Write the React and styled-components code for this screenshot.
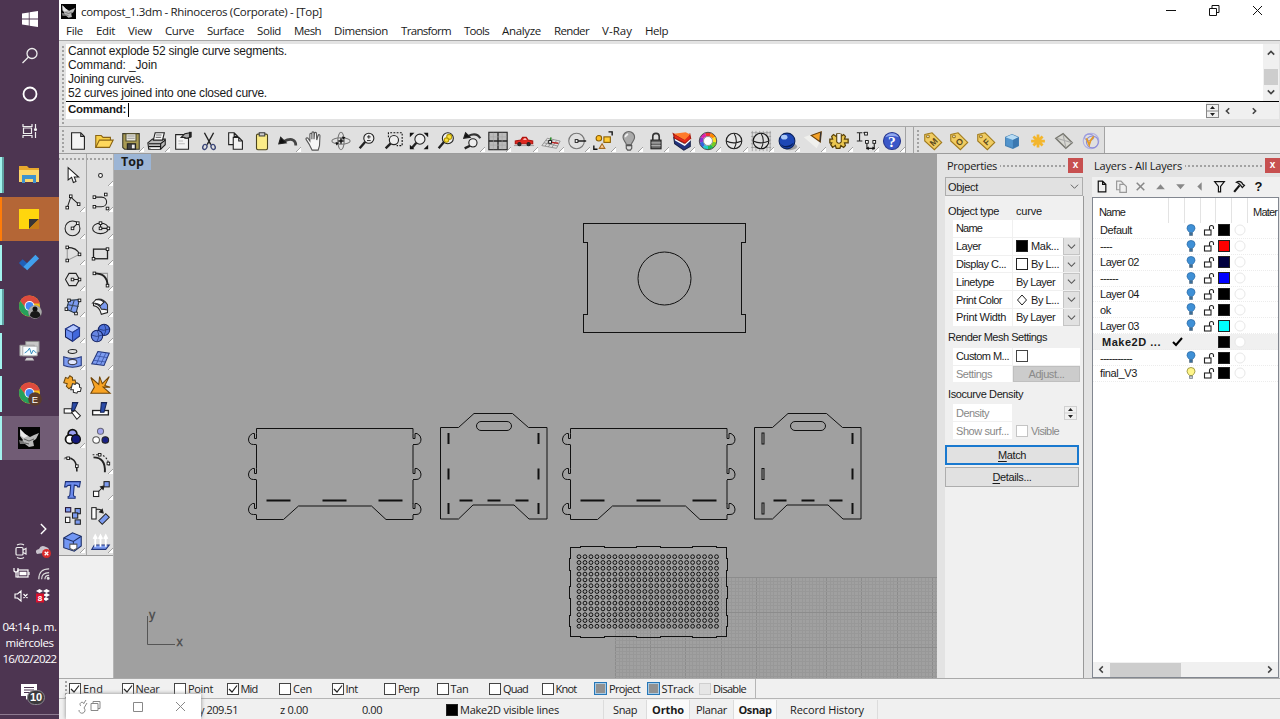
import React, { useLayoutEffect, useRef, useState } from 'react';
import styled, { createGlobalStyle, css } from 'styled-components';

const UI = '"Open Sans", "Noto Sans", sans-serif';
const SANS = '"Liberation Sans", Arial, sans-serif';

const Global = createGlobalStyle`
  * { box-sizing: border-box; }
  body { margin: 0; overflow: hidden; background: #f0f0f0; color: #1a1a1a; font: 12px ${SANS}; }
  svg { display: block; flex: none; overflow: visible; }
`;

/* ---------- text fitted to a fixed advance width ---------- */
const Span = styled.span`
  display: inline-block;
  flex: none;
  white-space: pre;
  font-family: ${p => (p.$ui ? UI : SANS)};
  font-size: ${p => p.$size || 12}px;
  font-weight: ${p => (p.$bold ? 700 : 400)};
  color: ${p => p.$color || 'inherit'};
`;
function Label({ w, ui, size, bold, color, children }) {
  const ref = useRef(null);
  const [gap, setGap] = useState(0);
  useLayoutEffect(() => {
    const natural = ref.current.getBoundingClientRect().width;
    setGap((w - natural) / Math.max(1, ref.current.textContent.length));
  }, [w]);
  return (
    <Span ref={ref} $ui={ui} $size={size} $bold={bold} $color={color} style={{ letterSpacing: `${gap}px` }}>
      {children}
    </Span>
  );
}

/* ---------- frame ---------- */
const Screen = styled.div`display: flex; width: 1280px; height: 719px; overflow: hidden;`;
const Main = styled.div`flex: 1; display: flex; flex-direction: column; min-width: 0; position: relative; background: #f0f0f0;`;
const Body = styled.div`display: flex; height: 524px; flex: none;`;

/* ---------- taskbar ---------- */
const Taskbar = styled.div`
  width: 59px; flex: none; height: 719px; background: #4d3551; color: #fff;
  display: flex; flex-direction: column;
`;
const StartItem = styled.div`height: 37.5px; flex: none; display: flex; align-items: center; justify-content: center;`;
const Apps = styled.div`margin-top: 3px; flex: none; display: flex; flex-direction: column;`;
const AppItem = styled.div`
  height: 43.9px; flex: none; display: flex; align-items: center; position: relative;
  padding-left: 18px;
  ${p => p.$bg && css`background: ${p.$bg};`}
`;
const AppBar = styled.div`
  width: 2px; height: ${p => (p.$full ? 44 : 36)}px; position: absolute; left: 0;
  background: ${p => p.$c};
  ${p => p.$double && css`width: 4px; background: linear-gradient(90deg, #a2f3ee 2px, #5fa3a3 2px);`}
`;
const Tray = styled.div`
  margin-top: 57px; flex: none; display: grid; grid-template-columns: 22px 22px; padding-left: 10px; row-gap: 0;
  grid-auto-rows: 22.6px; align-items: center; justify-items: center;
`;
const Clock = styled.div`margin-top: 11px; height: 48px; flex: none; display: flex; flex-direction: column; align-items: center; line-height: 16px;`;
const Notice = styled.div`position: relative; height: 28px; flex: none; margin-top: 13px; padding-left: 21px; padding-top: 4px;`;
const Count = styled.div`
  position: absolute; left: 27px; top: 10px; width: 18px; height: 15px; border-radius: 8px;
  background: #3a3a3d; border: 1px solid #8b8690; font: bold 11px/13px ${SANS}; text-align: center;
`;
const TaskLine = styled.div`height: 1px; flex: none; background: #8d7a90; margin-top: auto; margin-bottom: 4px;`;

/* ---------- title, menu, command ---------- */
const Title = styled.div`height: 22px; background: #fff; display: flex; align-items: center; padding-left: 2px; gap: 5px; flex: none;`;
const WinButtons = styled.div`margin-left: auto; display: flex; gap: 32px; padding-right: 17px; align-items: center; height: 20px; align-self: flex-start;`;
const Menu = styled.div`height: 18px; background: #fff; display: flex; padding: 0 0 0 7px; gap: 13px; align-items: center; flex: none; line-height: 16px;`;
const CommandArea = styled.div`
  height: 87px; border-top: 1px solid #a6a6a6; background: #e3e3e3; padding: 3px 1px 0 0; display: flex; flex: none;
  border-bottom: 1px solid #a9a9a9;
`;
const VGrip = styled.div`
  width: ${p => p.$w || 7}px; align-self: stretch; flex: none;
  background: radial-gradient(circle, #a2a2a2 0.9px, transparent 1.3px) 2px 1px / 4px 4px repeat-y;
`;
const CommandBox = styled.div`flex: 1; height: 75px; background: #fff; display: flex; flex-direction: column;`;
const History = styled.div`height: 58px; display: flex; border-bottom: 1px solid #000; line-height: 14px;`;
const Lines = styled.div`flex: 1; display: flex; flex-direction: column; padding: 0 0 0 2px; align-items: flex-start;`;
const VScroll = styled.div`width: 16px; background: #f0f0f0; display: flex; flex-direction: column; align-items: center; justify-content: space-between; padding: 5px 0;`;
const VThumb = styled.div`width: 14px; height: 16px; margin-top: 9px; background: #cdcdcd;`;
const Prompt = styled.div`height: 17px; display: flex; line-height: 15px; padding-left: 2px;`;
const Caret = styled.div`width: 1px; height: 14px; background: #000; margin: 1px 0 0 2px;`;
const PromptTools = styled.div`margin-left: auto; display: flex; align-items: center; width: 73px; background: #f0f0f0;`;
const PromptArrow = styled.div`width: ${p => p.$w}px; display: flex; justify-content: flex-end;`;

/* ---------- toolbars ---------- */
const Toolbars = styled.div`height: 27px; display: flex; border-bottom: 1px solid #9c9c9c; background: #f0f0f0; flex: none;`;
const Bar = styled.div`
  background: #e0e0e0; border-right: 1px solid #a3a3a3; display: flex; align-items: center; padding-top: 1px;
  width: ${p => p.$w}px; flex: none;
`;
const Tool = styled.div`width: ${p => p.$w || 26.26}px; height: 26.2px; flex: none; display: flex; align-items: center; justify-content: center; position: relative;`;
const Fly = styled.div`
  position: absolute; right: 0; bottom: 2px; width: 5px; height: 5px;
  background: linear-gradient(135deg, transparent 48%, #999 49%, #fff 60%);
`;
const Side = styled.div`width: 55px; flex: none; background: #f0f0f0; border-right: 1px solid #b5b5b5;`;
const SideTools = styled.div`display: grid; grid-template-columns: 28px 26px; width: 54px; height: 402px; background: #e0e0e0; border-bottom: 1px solid #9a9a9a;`;
const SideCol = styled.div`display: flex; flex-direction: column; ${p => p.$line && css`border-right: 1px solid #a8a8a8;`}`;
const HGrip = styled.div`
  height: ${p => p.$h || 8}px; flex: ${p => (p.$grow ? 1 : 'none')};
  background: radial-gradient(circle, #a2a2a2 0.9px, transparent 1.3px) 2px ${p => p.$y ?? 3}px / 4px 4px repeat-x;
`;

/* ---------- viewport ---------- */
const Viewport = styled.div`width: 823px; flex: none; background: #a0a0a0; position: relative;`;
const ViewTab = styled.div`position: absolute; left: 0; top: 0; width: 37px; height: 16px; background: #9cb5d5; padding-left: 7px; line-height: 15px;`;

/* ---------- right panels ---------- */
const Panels = styled.div`display: flex; flex: 1; background: #e3e3e3; min-width: 0;`;
const Panel = styled.div`width: ${p => p.$w}px; margin-left: ${p => p.$ml}px; display: flex; flex-direction: column; flex: none;`;
const PanelHead = styled.div`height: 23px; display: flex; align-items: center; gap: 3px; padding-left: 2px; flex: none;`;
const Close = styled.div`width: 15px; height: 15px; background: #c75050; color: #fff; font: bold 10px/13px ${SANS}; text-align: center;`;
const Select = styled.div`height: 19px; background: #e1e1e1; border: 1px solid #adadad; display: flex; align-items: center; justify-content: space-between; padding: 0 3px 0 2px;`;
const Props = styled.div`flex: 1; background: #f0f0f0; padding: 6px 4px 0 0; border-right: 1px solid #999; margin-right: -1px; display: flex; flex-direction: column;`;
const Section = styled.div`height: ${p => p.$h || 18}px; flex: none; display: flex; align-items: center; gap: 17px; padding-left: 3px; line-height: 14px;`;
const PropRow = styled.div`display: grid; grid-template-columns: 59px 67px; column-gap: 1px; height: 17.8px; padding-left: 8px; flex: none;`;
const Cell = styled.div`
  display: flex; align-items: center; background: ${p => (p.$plain ? 'transparent' : '#fff')}; padding-left: 3px; gap: 3px;
  border-bottom: 1px solid #f0f0f0; line-height: 14px; overflow: hidden;
`;
const Drop = styled.div`margin-left: auto; width: 17px; height: 18px; background: #e1e1e1; border: 1px solid #c4c4c4; display: flex; align-items: center; justify-content: center;`;
const SpinHolder = styled.div`margin: 0 3px 0 auto;`;
const Swatch = styled.div`width: 12px; height: 12px; flex: none; background: ${p => p.$c}; border: 1px solid #222;`;
const Button = styled.div`
  height: 20px; display: flex; align-items: center; justify-content: center; background: #e1e1e1; flex: none;
  border: ${p => (p.$focus ? '2px solid #1979cf' : '1px solid #adadad')}; line-height: 14px;
  u { text-underline-offset: 2px; }
`;
const DisabledButton = styled(Button)`height: 16px; background: #cccccc; border-color: #bfbfbf;`;
const LayerTools = styled.div`height: 20px; background: #f0f0f0; display: flex; align-items: center; width: 188px; flex: none; padding-bottom: 1px;`;
const LayerTool = styled.div`width: 19.6px; display: flex; justify-content: center;`;
const LayerBox = styled.div`flex: 1; width: 187px; background: #fff; border: 1px solid #828790; display: flex; flex-direction: column;`;
const LGrid = css`display: grid; grid-template-columns: 76px 16px 15.7px 15.7px 15.7px 16px 1fr; align-items: center;`;
const LayerHead = styled.div`${LGrid} height: 25px; line-height: 14px; overflow: hidden; flex: none;`;
const HeadCell = styled.div`height: 25px; padding-top: 2px; display: flex; align-items: center; border-right: ${p => (p.$last ? 0 : 1)}px solid #e3e3e3; padding-left: ${p => (p.$last ? 5 : 6)}px;`;
const LayerRow = styled.div`
  ${LGrid} height: 15.9px; flex: none; position: relative; top: 0; line-height: 14px; background: ${p => (p.$on ? '#f0f0f0' : '#fff')};
  border-bottom: 1px dotted #ececec; justify-items: center;
`;
const LayerName = styled.div`justify-self: start; padding-left: ${p => p.$pad || 8}px; line-height: 14px;`;
const BulbCell = styled.div`margin-right: 3px;`;
const HScroll = styled.div`margin-top: auto; height: 15px; background: #f0f0f0; display: flex; align-items: center; padding: 0 4px; justify-content: space-between;`;
const HThumb = styled.div`width: 71px; height: 14px; background: #cdcdcd; margin-right: auto; margin-left: 4px;`;

/* ---------- bottom bars ---------- */
const OsnapRow = styled.div`height: 21px; border-top: 1px solid #a9a9a9; display: flex; border-bottom: 1px solid #b5b5b5; flex: none;`;
const Osnaps = styled.div`width: 697px; border-right: 1px solid #b5b5b5; display: flex; align-items: center; padding-left: 3px;`;
const Snap = styled.div`width: 52.5px; flex: none; display: flex; align-items: center; gap: 2px; line-height: 16px; color: #222;`;
const Check = styled.div`
  width: 12px; height: 12px; flex: none; display: flex; align-items: center; justify-content: center;
  border: 1px solid ${p => ({ mixed: '#2677b8', off: '#cfcfcf', dim: '#c4c4c4' }[p.$s] || '#444')};
  background: ${p => ({ mixed: '#919191', off: '#e6e6e6' }[p.$s] || '#fff')};
  ${p => p.$s === 'mixed' && css`box-shadow: inset 0 0 0 1px #a9cbe4; width: 13px; height: 13px;`}
`;
const Status = styled.div`height: 20px; display: flex; align-items: center; padding: 1px 0 0 140px; line-height: 18px; flex: none;`;
const StatusItem = styled.div`
  width: ${p => p.$w}px; height: 19px; display: flex; align-items: center; flex: none; gap: 2px;
  justify-content: ${p => (p.$center ? 'center' : 'flex-start')};
  background: ${p => (p.$on ? '#fafafa' : 'transparent')};
  ${p => p.$line && css`border-right: 1px solid #dcdcdc;`}
`;
const MiniWindow = styled.div`
  position: absolute; left: 7px; top: 694px; width: 135px; height: 25px; background: #fff; box-shadow: 0 0 4px #888;
  display: flex; align-items: center; padding: 0 15px 0 11px; justify-content: space-between;
`;

/* ---------- icons ---------- */
const Ico = ({ s = 24, children, sw = 1.2, c = '#222', vb = 24 }) => (
  <svg width={s} height={s} viewBox={`0 0 ${vb} ${vb}`} fill="none" stroke={c} strokeWidth={sw}>{children}</svg>
);
const Chevron = ({ d = 'down', c = '#444', s = 9, sw = 1.4 }) => {
  const p = { down: 'M1 3l4 4 4-4', up: 'M1 7l4-4 4 4', left: 'M6.5 1.5L3 5l3.5 3.5', right: 'M3.5 1.5L7 5 3.5 8.5' }[d];
  return <Ico s={s} vb={10} c={c} sw={sw}><path d={p} /></Ico>;
};
const Spinner = ({ c = '#888' }) => (
  <svg width="13" height="14" viewBox="0 0 13 14">
    <rect x=".5" y=".5" width="12" height="13" fill="#f0f0f0" stroke={c} /><path d="M0 7h13" stroke={c} />
    <path d="M6.500 2l2.500 3h-5zM6.500 12l2.500-3h-5z" fill="#222" />
  </svg>
);
const N = ({ x, y }) => <rect x={x - 1.5} y={y - 1.5} width="3" height="3" fill="#fff" stroke="#111" strokeWidth="1" />;
const Mag = ({ x = 14, y = 9, r = 5.5 }) => (
  <><path d={`M${x - r * 0.7} ${y + r * 0.7}L4 20`} strokeWidth="2.6" stroke="#222" /><circle cx={x} cy={y} r={r} fill="#eee" /></>
);
const Sheet = ({ x = 5, y = 3, w = 14, h = 18 }) => (
  <path d={`M${x} ${y}h${w - 4}l4 4v${h - 4}h-${w}zM${x + w - 4} ${y}v4h4`} fill="#f3f3f3" stroke="#222" />
);

const mainTools = [
  ['new', 0, <Sheet />],
  ['open', 0, <><path d="M3 19V6h6l2 2h8v3" fill="#f8d048" stroke="#8a6414" /><path d="M3 19l4-8h15l-4 8z" fill="#ffd85c" stroke="#8a6414" /></>],
  ['save', 1, <><path d="M3 4h18v17H5l-2-2z" fill="#a99b53" stroke="#3c3b2c" /><path d="M6.500 4h11v8h-11z" fill="#e9e9df" stroke="#55502f" /><path d="M8 6.500h8M8 9h8" stroke="#999" /><path d="M8 15h9v6H8z" fill="#444" /><path d="M13 16h3v4h-3z" fill="#eee" stroke="none" /></>],
  ['print', 1, <><path d="M2 14l5-4h14v6l-5 5H3z" fill="#b9b9b9" /><path d="M8 11l2-8h10l-2 8z" fill="#fafafa" /><path d="M11 5.500h6M10.500 8h6" stroke="#777" /><path d="M3 15h13l5-4M3 18h13M16 15v6" stroke="#111" /><path d="M5 20h10" stroke="#fff" /></>],
  ['doc', 0, <><Sheet y={5} h={16} x={4} /><path d="M10 8l4-4 6-1v5l-4 1-3-1z" fill="#aaa" /><path d="M20 2v6" strokeWidth="3" stroke="#222" /><path d="M7 12h5M7 15h7" stroke="#bbb" /></>],
  ['cut', 0, <><path d="M7 3l7 13M17 3l-7 13" stroke="#222" strokeWidth="1.500" /><ellipse cx="7.500" cy="18.500" rx="2.200" ry="2.800" transform="rotate(25 7.5 18.5)" stroke="#3c4778" strokeWidth="1.500" /><ellipse cx="16.500" cy="18.500" rx="2.200" ry="2.800" transform="rotate(-25 16.5 18.5)" stroke="#3c4778" strokeWidth="1.500" /></>],
  ['copy', 0, <><Sheet x={4} y={3} w={10} h={13} /><Sheet x={9} y={8} w={10} h={13} /></>],
  ['paste', 0, <><rect x="6" y="4.500" width="12" height="17" rx="1.500" fill="#fbec88" stroke="#4b451d" /><rect x="9" y="3" width="6" height="3.500" fill="#ccc" stroke="#444" /></>],
  ['undo', 1, <><path d="M20.500 17c0-8-7-8-13-4.500" strokeWidth="3" stroke="#444" /><path d="M2 15l2-7 6 6z" fill="#111" /></>],
  ['pan', 0, <path d="M7 16L3.500 10.500c-1-1.500 1-2.500 2-1.500l2 3V5c0-2 2-2 2.200 0v5V3.500c0-2 2.300-2 2.300 0V10l.5-6c0-2 2.300-1.700 2.200 0L15 11l1.500-5c.6-1.600 2.300-1 2 .6L18 17l-1.500 5H10z" fill="#f7f7f7" stroke="#555" />],
  ['rotate', 0, <><ellipse cx="12" cy="12" rx="10" ry="3.500" stroke="#777" /><ellipse cx="12" cy="12" rx="3.500" ry="9.500" stroke="#777" /><path d="M12 9v6M9 12h6" stroke="#111" strokeWidth="1.600" /><path d="M6 13l4 1-3 3zM13 7l4 1-3 3z" fill="#111" stroke="none" /></>],
  ['zoom', 0, <><Mag /><path d="M12 7.500h4M14 5.500v4M12 11.500h4" strokeWidth="1" /></>],
  ['zoomwin', 0, <><path d="M7 8V3h15v14h-6" strokeDasharray="2 1.500" stroke="#111" /><Mag x={13} y={11} r={5} /></>],
  ['extents', 0, <><Mag x={13} y={10} /><path d="M2 3h5L2 8zM22 3h-5l5 5zM2 21v-5l5 5zM22 21v-5l-5 5z" fill="#111" stroke="none" /></>],
  ['zoomsel', 0, <><Mag r={6} /><circle cx="15.500" cy="7.500" r="2.700" fill="#ffe23a" stroke="#b39a08" /><circle cx="12.500" cy="11" r="2.400" fill="#ffe23a" stroke="#b39a08" /></>],
  ['undoview', 1, <><Mag x={13} y={14} r={4.5} /><path d="M21 9c-3-5-8-5-13-2.500" strokeWidth="2.500" stroke="#333" /><path d="M3 9l2-6 5 5z" fill="#111" /></>],
  ['views', 1, <><rect x="2" y="2.500" width="20" height="19" fill="#bcbcbc" stroke="#222" /><path d="M12 3v18M2 12h20" stroke="#222" strokeWidth="1.400" /><path d="M2.500 7.500h19M2.500 16.500h19M7 3v18M16.500 3v18" stroke="#a4a4a4" strokeWidth=".6" /></>],
  ['car', 1, <><path d="M2.500 15v-3l6-1 2-3h4l2 3 5 1v3z" fill="#e02a20" stroke="#b01510" /><path d="M1 17h22" stroke="#999" strokeWidth="1" /><path d="M11 11l1-2h2l1 2z" fill="#fbb" stroke="none" /><circle cx="7" cy="15.500" r="1.700" fill="#333" /><circle cx="17" cy="15.500" r="1.700" fill="#333" /></>],
  ['cplane', 1, <><path d="M2 17L8 9l14 3-4 8zM5.500 17.500l6-7.700M9 18.500l5.500-8M13 19l5-7.500M4.500 14l15 3.500M6.500 11.500l14 3.500" stroke="#888" strokeWidth=".9" /><path d="M11 13l1-5" stroke="#282" strokeWidth="1.500" /><path d="M12 13.500l8 1" stroke="#b22" strokeWidth="1.500" /><N x={11} y={13} /></>],
  ['circle', 1, <><circle cx="11.500" cy="12" r="8.500" stroke="#777" /><path d="M13 12h9" stroke="#111" strokeWidth="1.500" /><N x={11.5} y={12} /></>],
  ['select', 1, <><circle cx="7.500" cy="9" r="3" fill="#ffbf22" stroke="#8a5d00" /><rect x="13" y="7.500" width="7" height="6" fill="#ffcc35" stroke="#8a5d00" /><path d="M8 20l3-5 3 5z" fill="#ffcf9a" stroke="#a36a20" /><path d="M18 2h4v4M2 17v4h4" stroke="#111" strokeWidth="1.500" /></>],
  ['bulb', 1, <><path d="M9 16c0-3-3.500-4-3.500-8a6.300 6.300 0 0 1 12.600 0c0 4-3.500 5-3.500 8z" fill="#aaa" stroke="#666" /><path d="M9 17h6v3l-1.500 2h-3L9 20z" fill="#ddd" stroke="#555" /><path d="M8 8c0-2 1.500-3 3-3.500" stroke="#eee" strokeWidth="1.800" /></>],
  ['lock', 1, <><path d="M8.500 11V7c0-4.500 7-4.500 7 0v4" strokeWidth="1.800" stroke="#333" /><rect x="6.500" y="11" width="11" height="9.500" fill="#666" stroke="#222" /><path d="M7 14h10M7 17h10" stroke="#aaa" /></>],
  ['shade', 1, <><path d="M3 8l12 8 6-5v7l-7 4-10-7z" fill="#24347f" stroke="#1b2447" /><path d="M2.500 4l12 6.500 6-6 1 5-6 5L4 9z" fill="#e72a19" stroke="#a3180c" /><path d="M3 4l13-1.500 5 2.500-6 6z" fill="#ff7a2a" stroke="none" /><path d="M4 9.500l11 6 6.500-6v2l-6.500 6-10.500-6z" fill="#fff" stroke="none" /></>],
  ['wheel', 1, <>{['#e33', '#f80', '#fd2', '#7c2', '#2b5', '#2cc', '#36d', '#83c', '#d2a'].map((c, i) => <circle key={c} cx="12" cy="12" r="7.300" stroke={c} strokeWidth="4" strokeDasharray="5.150 60" transform={`rotate(${i * 40 - 110} 12 12)`} />)}<circle cx="12" cy="12" r="9.500" stroke="#333" strokeWidth=".9" /><circle cx="12" cy="12" r="4.900" fill="#fff" stroke="#555" strokeWidth=".6" /></>],
  ['sphere', 1, <><circle cx="12" cy="12" r="8.500" fill="#e6e6e6" stroke="#222" /><path d="M3.500 12q8 4 17 0M12 3.500q5 8 0 17" stroke="#222" /></>],
  ['gridsphere', 1, <><path d="M2.500 1v22M6.500 1v22M10.500 1v22M14.500 1v22M18.500 1v22M1 3h22M1 7h22M1 11h22M1 15h22M1 19h22M22 1v22" stroke="#888" strokeWidth=".7" /><circle cx="12" cy="12" r="8.500" fill="#ddd" stroke="#111" /><path d="M3.500 12q8 4 17 0M12 3.500q5 8 0 17" stroke="#222" /></>],
  ['ball', 1, <><ellipse cx="15" cy="18" rx="8" ry="4" fill="#777" opacity=".6" stroke="none" /><circle cx="12" cy="12" r="8.600" fill="#1d47b5" stroke="#0b235e" /><path d="M5 15c4 4 9 3 14-1-1 5-10 8-14 1z" fill="#081f5c" stroke="none" /><ellipse cx="9" cy="7.800" rx="3.500" ry="2.500" fill="#aac8f8" stroke="none" /></>],
  ['cone', 1, <><path d="M2 8l8-3 9 9-3 6z" fill="#f6f6f2" opacity=".7" stroke="none" /><path d="M10 6l11-4-1 11z" fill="#f5a329" stroke="#6c4109" /><path d="M20.500 2.500l-1 10" stroke="#333" strokeWidth="1.400" /></>],
  ['gear', 1, <><path d="M10 4h3l1 3 3-2 2 2-1 3h4v4h-4l1 3-2 2-3-2-1 3h-4l-1-3-3 2-2-3 1-2H2v-4h3L4 7l2-2 3 2z" fill="#eac64f" stroke="#584109" strokeWidth="1.400" /><path d="M9.500 4v9q2.500 3 5 0V4" fill="#eee" stroke="#584109" /></>],
  ['dims', 1, <><path d="M5 3v9M2 3h6M2 12h6M9 3h3M13 20h8M13 14v7M21 14v7" stroke="#222" /><N x={12} y={4} /><N x={13} y={13} /><N x={21} y={13} /><path d="M12 20l3-2v4zM22 20l-3-2v4z" fill="#111" stroke="none" /></>],
  ['help', 1, <><circle cx="12" cy="12" r="9.300" fill="#3a57c8" stroke="#27368d" /><path d="M4.500 8c3-6 12-6 15 0-5-2-10-2-15 0z" fill="#8fa7ee" stroke="none" /><text x="12" y="18" textAnchor="middle" fontSize="17" fontFamily="Liberation Serif" fontWeight="700" fill="#fff" stroke="none">?</text></>],
];

const Tag = ({ t }) => (
  <><path d="M3 5l8-2 10.500 10.500-8 8L3 12z" fill="#f0cc62" stroke="#a07a1c" /><circle cx="6.500" cy="7" r="1.500" fill="#eee" stroke="#a07a1c" />
    <text x="12.500" y="16.500" transform="rotate(-45 12.5 13)" textAnchor="middle" fontSize="9.500" fontFamily="Liberation Sans" fontWeight="700" fill="#5b4a1d" stroke="none">{t}</text></>
);
const vrayTools = [
  ['m', <Tag t="M" />], ['o', <Tag t="O" />], ['f', <Tag t="F" />],
  ['cube', <><path d="M5 8l7-3 7 3v9l-6 3-8-3z" fill="#5294cc" stroke="#4682b5" /><path d="M5 8l7-3 7 3-6 3z" fill="#b8dcf4" stroke="none" /><path d="M13 11v9l6-3V8z" fill="#3c78b0" stroke="none" /></>],
  ['star', <path d="M12 5v14M4.500 12h15M7 7l10 10M17 7L7 17" stroke="#f3b62d" strokeWidth="3" />],
  ['plane', <><path d="M3 9l8-5 10 10-7 6z" fill="#d8d8d2" stroke="#77776f" strokeWidth="1.500" /><path d="M4 9l17 5M11 5l3 14" stroke="#aaa" /></>],
  ['vray', <><circle cx="12" cy="12" r="8.500" stroke="#b0b0e2" /><circle cx="13.500" cy="13" r="6.500" stroke="#8c8cd8" /><ellipse cx="10" cy="8" rx="5" ry="3.500" stroke="#9999dd" /><path d="M7 9l3 7c1-4 3-7 5-9" stroke="#e29a25" strokeWidth="2" /></>],
];

const B = '#7c9bf0';
const sideA = [
  [0, <path d="M7 3v14l4-3 2 6 3-1.300-2-5h5z" fill="#fff" stroke="#222" />],
  [1, <><path d="M6 19L10 7l9 8" /><N x={6} y={19} /><N x={10} y={6} /><N x={19} y={15} /></>],
  [1, <><circle cx="12" cy="13" r="8.500" /><path d="M12 13l6-6" /><N x={12} y={13} /><N x={18} y={7} /></>],
  [1, <><path d="M6 5v15l14-7" stroke="#999" /><path d="M6 5q11 0 14 8" /><N x={6} y={5} /><N x={20} y={13} /><N x={6} y={20} /></>],
  [1, <><path d="M8 5h8l4 7-4 7H8l-4-7z" /><path d="M12 12h8" /><N x={12} y={12} /><N x={20} y={12} /></>],
  [1, <><path d="M8 5l12-1-4 16-11-5z" fill={B} stroke="#234" /><path d="M14 5l-4 12M7 10l12 2" stroke="#345" /><N x={8} y={5} /><N x={20} y={5} /><N x={16} y={20} /><N x={5} y={15} /></>],
  [1, <><path d="M4 8l9-5 7 4v9l-8 6-8-5z" fill="#6b8ef2" stroke="#111d55" /><path d="M4 8l8 4 8-5-7-4z" fill="#b7caff" stroke="#273d90" /><path d="M12 12v10l8-6V7z" fill="#4168dc" stroke="#273d90" /></>],
  [1, <><ellipse cx="12" cy="4" rx="5" ry="2.200" /><path d="M2 10q10 4 20 0v10q-10 4-20 0z" fill={B} stroke="#223579" /><ellipse cx="12" cy="16" rx="5" ry="3" fill="#e2e9ff" stroke="#445" /></>],
  [0, <><path d="M4 4l3 1 2-3 3 2v3h3l1 4-3 1v4l-3-1-2 2-3-3 1-3-4-1z" fill="#f5a82c" stroke="#6c4a13" /><path d="M12 11l3 1 2-2 3 2v3l2 1-1 4-3 0-1 2-4-1v-3h-3z" fill="#fff" stroke="#333" /></>],
  [0, <><rect x="2.500" y="10" width="9" height="5" fill="#fff" /><path d="M12 3h6l-4 9h-3z" fill="#294aa8" stroke="#162454" /><path d="M11 14l4-2 6 6-4 4z" fill="#fff" /></>],
  [1, <><circle cx="12" cy="9" r="5" fill="#9a9ef1" stroke="#111" strokeWidth="2" /><circle cx="9" cy="15" r="5" fill="#fff" stroke="#111" strokeWidth="2" /><circle cx="16" cy="15" r="5" fill="#15197c" stroke="#111" strokeWidth="1.500" /></>],
  [0, <><path d="M3 6q14-3 14 15" strokeWidth="1.800" /><path d="M2 7q3-2 8 0" stroke="#888" /><N x={7} y={6} /><N x={17} y={15} /></>],
  [0, <path d="M4 3h17l-1 6h-2q0-2-4-2l-1 11q0 2 2 2v2H7v-2q2 0 2-2l1-11q-4 0-5 2H3z" fill="#6c8bed" stroke="#1b2f75" />],
  [0, <><rect x="4" y="3" width="6" height="5" fill={B} stroke="#213" /><rect x="15" y="4" width="6" height="6" fill={B} /><rect x="12" y="9" width="6" height="6" fill={B} /><rect x="4" y="14" width="5" height="6" fill="#fff" /><rect x="15" y="17" width="6" height="5" fill={B} /></>],
  [1, <><path d="M2 8l10-6 10 4v11l-8 6-12-4z" fill="#7297f4" stroke="#1c2e65" /><path d="M2 8l11 4 9-6M13 12v10" stroke="#1c2e65" /><path d="M9 15h8v5l-4 2-4-2z" fill="#fff" stroke="#555" /></>],
];
const sideB = [
  [1, <circle cx="12" cy="12" r="2.200" fill="#fff" stroke="#222" />],
  [1, <><path d="M5 7h8c8 0 8 11 0 11H5" /><N x={5} y={7} /><N x={5} y={18} /><N x={18} y={4} /><N x={20} y={20} /></>],
  [1, <><ellipse cx="12" cy="13" rx="9" ry="6" /><path d="M12 7v6h9" /><N x={12} y={7} /><N x={12} y={13} /><N x={21} y={13} /></>],
  [1, <><rect x="4" y="7" width="16" height="11" strokeWidth="1.500" /><N x={20} y={7} /><N x={4} y={18} /></>],
  [1, <><path d="M5 5h15v14" stroke="#999" /><path d="M5 5c11 0 15 5 15 14" strokeWidth="2.200" /><N x={5} y={5} /><N x={20} y={19} /></>],
  [1, <><path d="M4 7v4q7 1 9 10l7-2v-8" fill="#f5f5f5" stroke="#222" /><path d="M7 4q8-2 13 6v6q-3-1-7-1-2-5-7-6z" fill={B} stroke="#333" /><path d="M3 8l4-4q6 0 9 3l-4 4q-3-3-9-3z" fill="#fff" stroke="#222" /></>],
  [1, <><circle cx="16" cy="9" r="6.500" fill="#4f73dc" stroke="#152465" /><circle cx="8" cy="16" r="6.500" fill="#6685e2" stroke="#152465" /><path d="M10 8q5 3 12 0M2 15q5 3 12 0M16 3q4 5 0 12M8 10q4 5 0 12" stroke="#223579" strokeWidth=".9" /></>],
  [1, <><path d="M9 4l13 2-6 14-14-2z" fill={B} stroke="#223579" /><path d="M13 5L7 19M18 6l-6 13M7 9l13 2M4 14l14 2" stroke="#3650a2" strokeWidth=".9" /></>],
  [0, <path d="M1 4l9 8 1-9 3 8 8-8-5 10 6 2H15l8 7H1l4-7z" fill="#f8a323" stroke="#724608" />],
  [0, <><rect x="3" y="12" width="18" height="5" fill="#fff" stroke="#222" strokeWidth="1.500" /><path d="M13 3h6l-3 11h-4z" fill="#294aa8" stroke="#162454" /></>],
  [0, <><circle cx="12" cy="6" r="3.500" fill="#a3a5ef" stroke="#667" /><circle cx="7" cy="16" r="3.800" fill="#fff" stroke="#555" /><circle cx="17.500" cy="16" r="3.800" fill="#1b2185" /></>],
  [1, <><path d="M4 5q14 0 13 17" strokeWidth="2.200" /><path d="M3 2h10q8 3 9 14" strokeDasharray="2 2" /><N x={11} y={2} /><N x={21} y={12} /></>],
  [1, <><path d="M10 14l5-5" /><path d="M16 8l-1 4-3-3z" fill="#111" /><rect x="4" y="14" width="6" height="6" fill="#fff" /><rect x="16" y="3" width="6" height="6" fill={B} /></>],
  [0, <><rect x="2" y="3" width="5" height="13" fill="#fff" /><path d="M7 5q5-1 7 2" /><path d="M15 9l-4-1 3-3z" fill="#111" /><path d="M10 18l8-8 4 4-8 8z" fill={B} /></>],
  [1, <><path d="M5 16h17l-4 5H2z" fill={B} stroke="#223579" /><path d="M6 18V7M12 18V7M18 18V7M4 9l2-4 2 4M10 9l2-4 2 4M16 9l2-4 2 4" stroke="#fff" strokeWidth="2" /></>],
];

const Chrome = ({ badge, e }) => (
  <svg width="26" height="26" viewBox="0 0 26 26">
    <circle cx="11.500" cy="12" r="10.500" fill="#f2bd1d" />
    <path d="M2.300 7A10.500 10.500 0 0 1 21.700 9.500H12L8 15z" fill="#dd4b3e" />
    <path d="M2.300 7A10.500 10.500 0 0 0 11.500 22.500l4-8.500-7 1z" fill="#26a05b" />
    <circle cx="11.500" cy="12" r="4.900" fill="#fff" /><circle cx="11.500" cy="12" r="3.900" fill="#4285f4" />
    <circle cx="17" cy="18" r="6.800" fill={badge} />
    {e ? <text x="17" y="21.500" fontSize="9.500" textAnchor="middle" fontFamily="Liberation Sans" fill="#fff">E</text>
      : <><circle cx="17" cy="18" r="6.500" fill="#aaa" /><circle cx="17" cy="15" r="2.500" fill="#111" /><path d="M12 22q0-5 5-5t5.500 5q-5 4.500-10.500 0z" fill="#181818" /></>}
  </svg>
);
const Rhino = ({ s }) => (
  <svg width={s} height={s} viewBox="0 0 22 22"><rect width="22" height="22" fill="#050505" />
    <path d="M2 2l5 5 5 3 4-2 5-2-3 6-3 2 1 5-5 1-4-3-5 0 3-4-3-4z" fill="#b9b9b9" />
    <path d="M2 2l5 5 3 2-4 2-3-2z" fill="#e9e9e9" /><path d="M6 12l5 2 5-2M7 16l4 1" stroke="#5c5c5c" fill="none" /><path d="M1 13l4 1 3 3-6 0z" fill="#777" /></svg>
);
const winIcon = <svg width="16" height="16" viewBox="0 0 16 16" fill="#fff"><path d="M0 2.400l6.800-1v6.200H0zM7.600 1.300L16 0v7.600H7.600zM0 8.400h6.800v6.200l-6.800-1zM7.600 8.400H16V16l-8.400-1.200z" /></svg>;
const appIcons = {
  explorer: <svg width="22" height="22" viewBox="0 0 22 22"><path d="M1 2h8l2 2h10v14H1z" fill="#e8a92d" /><path d="M1 6h20v12H1z" fill="#fdd76c" /><path d="M4 11h14v8h-3v-4H7v4H4z" fill="#3f93cf" /></svg>,
  sticky: <svg width="22" height="22" viewBox="0 0 22 22"><path d="M1 1h20v10l-9 10H1z" fill="#ffd60d" /><path d="M11 11h10L11 21z" fill="#373435" /><path d="M21 11v10H11z" fill="#c67c17" /></svg>,
  todo: <svg width="22" height="22" viewBox="0 0 24 22"><path d="M1 11l4-4 6 5-4 5z" fill="#2060b8" /><path d="M6 15L19 2l4 4L10 19z" fill="#41a0ee" /></svg>,
  monitor: <svg width="23" height="22" viewBox="0 0 24 22"><path d="M8 1h14v11H8z" fill="#c8c8c8" stroke="#888" /><path d="M2 5h15v11H2z" fill="#e5e5e5" stroke="#999" /><path d="M5 6h15v10H5z" fill="#f8fdff" stroke="#aaa" /><path d="M7 13l3-2 2-3 2 6 2-4 3 3" stroke="#2b86b8" fill="none" /><path d="M9 18h6l2 3H7z" fill="#ccc" /></svg>,
};
const apps = [
  ['explorer', appIcons.explorer, { double: true }, null],
  ['sticky', appIcons.sticky, { c: '#ff7c08', full: true }, '#b46636'],
  ['todo', appIcons.todo, { c: '#a2f3ee' }, null],
  ['chrome', <Chrome badge="#888" />, { double: true }, null],
  ['monitor', appIcons.monitor, { c: '#a2f3ee' }, null],
  ['chromeE', <Chrome badge="#5b3c2c" e />, { c: '#a2f3ee' }, null],
  ['rhino', <Rhino s={22} />, { c: '#a2f3ee', full: true }, '#715c75'],
];
const tray = [
  ['e', null],
  ['more', <Chevron d="right" c="#fff" s={14} sw={1} />],
  ['meet', <Ico s={16} c="#eee" vb={16}><rect x="3" y="4.500" width="7" height="7.500" rx="1" /><path d="M10 7l3-1.500v5.500l-3-1.500M4 2q4-2 7 0M4 14.500q4 2 7 0" /></Ico>],
  ['cloud', <svg width="17" height="16" viewBox="0 0 17 16"><path d="M2 11q-3-4 2-5 2-5 7-2 4 1 3 5z" fill="#c9c3cc" /><circle cx="11.500" cy="10.500" r="4.500" fill="#d92b2b" /><path d="M9.700 8.700l3.600 3.600m0-3.600l-3.600 3.600" stroke="#fff" strokeWidth="1.300" /></svg>],
  ['battery', <Ico s={17} c="#fff" vb={17}><rect x="5" y="5" width="10" height="7" /><path d="M6.500 8.500h7" strokeWidth="3.500" /><path d="M16 7v3M1 3v3q2 2 4 0V3M3 7v5h2" /></Ico>],
  ['wifi', <Ico s={15} c="#ddd" vb={16}><path d="M3 14Q3 3 14 3M6 14q0-7 8-7M9.500 14q0-4 4.500-4" /><circle cx="13" cy="13" r="1" fill="#fff" /></Ico>],
  ['mute', <Ico s={16} c="#fff" vb={16} sw={1.1}><path d="M2 6h2.500L8 3v10l-3.500-3H2zM10.500 6l4 4m0-4l-4 4" /></Ico>],
  ['dropbox', <svg width="16" height="16" viewBox="0 0 16 16"><path d="M1 3l3.500-2L8 3 4.500 5zM8 3l3.500-2L15 3l-3.500 2zM8 7l3.500-2L15 7l-3.500 2zM8 11l3-2 3 2-3 2z" fill="#fff" /><rect x="1" y="5.500" width="8" height="9" fill="#d9122c" /><text x="5" y="13" fontSize="8" fontWeight="700" textAnchor="middle" fontFamily="Liberation Sans" fill="#fff">8</text></svg>],
];

/* ---------- drawing ---------- */
const Wide = ({ x }) => (
  <g>
    <path d={`M${x} 433.500V428.500h156.500v5M${x} 445v23.500M${x} 480v24M${x + 156.500} 445v23.500M${x + 156.500} 480v24M${x} 515v4.500h27L${x + 42} 506h73l14.500 13.500h27V515`} />
    {[438.500, 473.500, 508.500].map(y => (
      <path key={y} d={`M${x} ${y - 5}v5h-2v-5h-2q-4 2-4 5.500 0 5.500 5 5.500h3M${x + 156.500} ${y - 5}v5h2v-5h2q4 2 4 5.500 0 5.500-5 5.500h-3`} />
    ))}
    {[10, 66, 122].map(o => <path key={o} d={`M${x + o} 500.500h24`} strokeWidth="2" />)}
  </g>
);
const Tall = ({ x, open }) => (
  <g>
    <path d={`M${x} 427.500h18l15.500-14h38.500l16 14h18.500v91.500h-18l-15-14h-41l-14.500 14h-18z`} />
    <rect x={x + 36} y="421.500" width="35" height="9" rx="4.500" />
    {[433, 468.500, 503].map(y => (
      <g key={y}>
        {open ? <rect x={x + 7.500} y={y} width="2" height="11" /> : <path d={`M${x + 8} ${y}v11`} strokeWidth="2" />}
        <path d={`M${x + 98} ${y}v11`} strokeWidth="2" />
      </g>
    ))}
    {[19, 47, 75].map(o => <path key={o} d={`M${x + o} 500.500h13`} strokeWidth="2" />)}
  </g>
);
const rep = (n, f) => Array.from({ length: n }, (_, i) => f(i));
const Drawing = () => (
  <svg width="823" height="524" viewBox="114 154 823 524" fill="none" stroke="#111" strokeWidth="1">
    <g shapeRendering="crispEdges">
      {rep(92, i => <path key={i} d={`M${615.5 + i * 3.52} 577v101`} stroke={i % 10 ? '#989898' : '#8c8c8c'} />)}
      {rep(29, i => <path key={i} d={`M615 ${577.5 + i * 3.52}h322`} stroke={i % 10 ? '#989898' : '#8c8c8c'} />)}
    </g>
    <path d="M583.500 223.500h162v19h-4v72h4v18h-162v-18h3.500v-72h-3.500z" shapeRendering="crispEdges" />
    <circle cx="664.500" cy="278.500" r="26.500" />
    <Wide x={256.500} /><Tall x={440.500} /><Wide x={570.500} /><Tall x={754.500} open />
    <path d="M570.500 547.500h10v-1h24v1h32v-1h24v1h32v-1h24v1h10v11h1v12h-1v16h1v12h-1v17h1v11h-1v10h-10v1h-24v-1h-32v1h-24v-1h-32v1h-24v-1h-10v-10h-1v-11h1v-17h-1v-12h1v-16h-1v-12h1z" shapeRendering="crispEdges" />
    {rep(13, r => rep(24, c => <circle key={`${r}-${c}`} cx={579 + c * 5.98} cy={556.700 + r * 5.800} r="1.900" stroke="#111" strokeWidth="1" />))}
    <path d="M147.500 616v28.500H175" stroke="#555" />
    <g fontFamily="Liberation Sans" fontSize="12.500" fill="#4a4a4a" stroke="#4a4a4a" strokeWidth=".3"><text x="149" y="619">y</text><text x="176.500" y="646">x</text></g>
  </svg>
);

/* ---------- data ---------- */
const menu = [['File', 17], ['Edit', 19], ['View', 24], ['Curve', 29], ['Surface', 37], ['Solid', 24], ['Mesh', 27], ['Dimension', 54], ['Transform', 50], ['Tools', 25], ['Analyze', 39], ['Render', 35], ['V-Ray', 30], ['Help', 23]];
const history = [['Cannot explode 52 single curve segments.', 219], ['Command: _Join', 89], ['Joining curves.', 76], ['52 curves joined into one closed curve.', 199]];
const layers = [
  ['Default', 32, '#000', 'b'], ['----', 12, '#f00', 'b'], ['Layer 02', 39, '#000040', 'b'], ['------', 18, '#00f', 'b'],
  ['Layer 04', 39, '#000', 'b'], ['ok', 11, '#000', 'b'], ['Layer 03', 39, '#0ff', 'b'], ['Make2D ...', 59, '#000', 'on'],
  ['-----------', 32, '#000', 'b'], ['final_V3', 37, '#000', 'y'],
];
const snaps = [['End', 20, 1], ['Near', 24, 1], ['Point', 25], ['Mid', 17, 1], ['Cen', 19], ['Int', 12, 1], ['Perp', 21], ['Tan', 18], ['Quad', 25], ['Knot', 21], ['Project', 31, 'mixed'], ['STrack', 32, 'mixed'], ['Disable', 33, 'off']];
const props = [['Layer', 25, 'Mak...', 28, '#000'], ['Display C...', 50, 'By L...', 28, '#fff'], ['Linetype', 38, 'By Layer', 39], ['Print Color', 46, 'By L...', 28, 'd'], ['Print Width', 50, 'By Layer', 39]];

const Tick = () => <Ico s={10} vb={10} c="#222" sw={1.2}><path d="M1 5l3 3 5-6.500" /></Ico>;
const Bulb = ({ y }) => (
  <svg width="10" height="13" viewBox="0 0 10 13"><path d="M3.500 8.500Q1 6 1 4.200a4 3.700 0 0 1 8 0Q9 6 6.500 8.500z" fill={y ? '#fff68a' : '#3f90d6'} stroke={y ? '#8f8830' : '#2c6ca8'} strokeWidth=".8" /><path d="M3.500 9h3v2.500h-3z" fill={y ? '#ccc' : '#356f9f'} stroke="#567" strokeWidth=".6" /></svg>
);
const Unlock = () => <Ico s={12} vb={12} c="#222" sw={1.1}><rect x="1.500" y="6" width="6.500" height="5" fill="#fff" /><path d="M6.500 6V3.500q0-2 2-2t2 2V5" /></Ico>;

const layerTools = [
  <path d="M3 1h4l3 3v7H3zM7 1v3h3" stroke="#111" />,
  <><path d="M1.500 1h4l2 2v6h-6z" stroke="#999" /><path d="M4.500 4h4l2 2v5.500h-6z" fill="#f0f0f0" stroke="#999" /></>,
  <path d="M2.500 2.500l7 7m0-7l-7 7" stroke="#888" strokeWidth="1.400" />,
  <path d="M2 8.500h8L6 4z" fill="#888" stroke="none" />,
  <path d="M2 4h8L6 8.500z" fill="#888" stroke="none" />,
  <path d="M8 2v8L4 6z" fill="#888" stroke="none" />,
  <path d="M1.500 1.500h9L7 6v5H5V6z" stroke="#111" />,
  <><path d="M2 11l5-6" stroke="#111" strokeWidth="2" /><path d="M4 2q4-2 6 2l1.500 1-2 2L8 5 6 3z" fill="#ddd" stroke="#111" /></>,
  <text x="6" y="10.500" textAnchor="middle" fontSize="12" fontWeight="700" fontFamily="Liberation Sans" fill="#111" stroke="none">?</text>,
];

const S = p => <Label size={11} {...p} />;

export default function App() {
  return (
    <Screen>
      <Global />
      <Taskbar>
        <StartItem>{winIcon}</StartItem>
        <StartItem><Ico s={18} vb={18} c="#eee" sw={1.3}><circle cx="11" cy="6.500" r="5" /><path d="M7.500 10L1.500 16" /></Ico></StartItem>
        <StartItem><Ico s={16} vb={16} c="#fff" sw={1.8}><circle cx="8" cy="8" r="6.500" /></Ico></StartItem>
        <StartItem><Ico s={18} vb={18} c="#eee"><path d="M2 2v2.500h9V2M2 16v-2.500h9V16M2.500 6h8v5.500h-8zM14.500 2v4M14.500 10v6" /><circle cx="14.500" cy="7.500" r="1" fill="#fff" /></Ico></StartItem>
        <Apps>
          {apps.map(([k, icon, bar, bg]) => (
            <AppItem key={k} $bg={bg}><AppBar $c={bar.c} $full={bar.full} $double={bar.double} />{icon}</AppItem>
          ))}
        </Apps>
        <Tray>{tray.map(([k, i]) => <div key={k}>{i}</div>)}</Tray>
        <Clock><Label ui size={11.5} w={54}>04:14 p. m.</Label><Label ui size={11.5} w={48}>miércoles</Label><Label ui size={11.5} w={54}>16/02/2022</Label></Clock>
        <Notice>
          <svg width="16" height="17" viewBox="0 0 16 17"><path d="M0 0h16v12H8l-3 4v-4H0z" fill="#fff" /><path d="M3 3.500h10M3 6h10M3 8.500h7" stroke="#4d3551" /></svg>
          <Count>10</Count>
        </Notice>
        <TaskLine />
      </Taskbar>

      <Main>
        <Title>
          <Rhino s={15} /><Label ui w={241} size={11.5}>compost_1.3dm - Rhinoceros (Corporate) - [Top]</Label>
          <WinButtons>
            <Ico s={11} vb={11} c="#111" sw={1}><path d="M0 5.500h10" /></Ico>
            <Ico s={11} vb={11} c="#111" sw={1}><path d="M.5 3.500h7v7h-7zM3 3.500V.5h7v7H7.500" /></Ico>
            <Ico s={11} vb={11} c="#111" sw={1}><path d="M1 1l9 9m0-9l-9 9" /></Ico>
          </WinButtons>
        </Title>
        <Menu>{menu.map(([t, w]) => <Label key={t} ui size={11.5} w={w}>{t}</Label>)}</Menu>
        <CommandArea>
          <VGrip />
          <CommandBox>
            <History>
              <Lines>{history.map(([t, w]) => <Label key={t} w={w} size={12}>{t}</Label>)}</Lines>
              <VScroll><Chevron d="up" s={8} sw={2} /><VThumb /><Chevron s={8} sw={2} /></VScroll>
            </History>
            <Prompt>
              <Label w={58} bold size={11.5}>Command:</Label><Caret />
              <PromptTools>
                <Spinner /><PromptArrow $w={13}><Chevron d="left" s={8} sw={2} /></PromptArrow><PromptArrow $w={26}><Chevron d="right" s={8} sw={2} /></PromptArrow>
              </PromptTools>
            </Prompt>
          </CommandBox>
        </CommandArea>
        <Toolbars>
          <Bar $w={847}><VGrip $w={6} />{mainTools.map(([k, f, i]) => <Tool key={k}><Ico s={22}>{i}</Ico>{f ? <Fly /> : null}</Tool>)}</Bar>
          <Bar $w={8} />
          <Bar $w={191}><VGrip $w={6} />{vrayTools.map(([k, i]) => <Tool key={k}><Ico s={22}>{i}</Ico></Tool>)}</Bar>
        </Toolbars>

        <Body>
          <Side>
            <SideTools>
              {[sideA, sideB].map((col, n) => (
                <SideCol key={n} $line={n === 0}><HGrip />{col.map(([f, i], k) => <Tool key={k} $w={26}><Ico s={21}>{i}</Ico>{f ? <Fly /> : null}</Tool>)}</SideCol>
              ))}
            </SideTools>
          </Side>
          <Viewport><Drawing /><ViewTab><Label w={23} size={12.5} bold ui>Top</Label></ViewTab></Viewport>
          <Panels>
            <Panel $w={138} $ml={8}>
              <PanelHead><Label w={50} ui size={11}>Properties</Label><HGrip $grow $h={4} $y={0} /><Close>x</Close></PanelHead>
              <Select><S w={30}>Object</S><Chevron c="#555" sw={1} /></Select>
              <Props>
                <Section><S w={51}>Object type</S><S w={26}>curve</S></Section>
                <PropRow><Cell><S w={26}>Name</S></Cell><Cell /></PropRow>
                {props.map(([a, aw, b, bw, c]) => (
                  <PropRow key={a}>
                    <Cell><S w={aw}>{a}</S></Cell>
                    <Cell>
                      {c && c !== 'd' ? <Swatch $c={c} /> : null}
                      {c === 'd' ? <Ico s={12} vb={12} sw={1}><path d="M6 1l4.500 5L6 11 1.500 6z" /></Ico> : null}
                      <S w={bw}>{b}</S><Drop><Chevron c="#555" sw={1.2} /></Drop>
                    </Cell>
                  </PropRow>
                ))}
                <Section $h={21}><S w={99}>Render Mesh Settings</S></Section>
                <PropRow><Cell><S w={53}>Custom M...</S></Cell><Cell><Check /></Cell></PropRow>
                <PropRow><Cell><S w={36} color="#888">Settings</S></Cell><DisabledButton><S w={36} color="#8a8a8a">Adjust...</S></DisabledButton></PropRow>
                <Section $h={21}><S w={75}>Isocurve Density</S></Section>
                <PropRow><Cell><S w={33} color="#888">Density</S></Cell><Cell $plain><SpinHolder><Spinner c="#d0d0d0" /></SpinHolder></Cell></PropRow>
                <PropRow><Cell><S w={53} color="#888">Show surf...</S></Cell><Cell $plain><Check $s="dim" /><S w={28} color="#888">Visible</S></Cell></PropRow>
                <Section $h={5} />
                <Button $focus><S w={28}><u>M</u>atch</S></Button>
                <Section $h={2} />
                <Button><S w={39}><u>D</u>etails...</S></Button>
              </Props>
            </Panel>
            <Panel $w={188} $ml={9}>
              <PanelHead><Label w={88} ui size={11}>Layers - All Layers</Label><HGrip $grow $h={4} $y={0} /><Close>x</Close></PanelHead>
              <LayerTools>{layerTools.map((i, k) => <LayerTool key={k}><Ico s={13} vb={12} sw={1.1}>{i}</Ico></LayerTool>)}</LayerTools>
              <LayerBox>
                <LayerHead>
                  <HeadCell><S w={26}>Name</S></HeadCell><HeadCell /><HeadCell /><HeadCell /><HeadCell /><HeadCell />
                  <HeadCell $last><S w={24}>Mater</S></HeadCell>
                </LayerHead>
                {layers.map(([t, w, c, s], k) => (
                  <LayerRow key={k} $on={s === 'on'}>
                    <LayerName $pad={s === 'on' ? 9 : 7}><S w={w} bold={s === 'on'}>{t}</S></LayerName>
                    {s === 'on' ? <Ico s={11} vb={11} c="#000" sw={2}><path d="M1 6l3 3 6-7" /></Ico> : <span />}
                    {s === 'on' ? <span /> : <BulbCell><Bulb y={s === 'y'} /></BulbCell>}
                    {s === 'on' ? <span /> : <Unlock />}
                    <Swatch $c={c} />
                    <Ico s={12} vb={12} c="#e8e8e8" sw={1}><circle cx="6" cy="6" r="5" fill="#fff" /></Ico>
                    <span />
                  </LayerRow>
                ))}
                <HScroll><Chevron d="left" s={9} sw={1.7} /><HThumb /><Chevron d="right" s={9} sw={1.7} /></HScroll>
              </LayerBox>
            </Panel>
          </Panels>
        </Body>

        <OsnapRow>
          <Osnaps><VGrip $w={7} />{snaps.map(([t, w, s]) => <Snap key={t}><Check $s={s}>{s === 1 ? <Tick /> : null}</Check><Label ui w={w} size={11}>{t}</Label></Snap>)}</Osnaps>
        </OsnapRow>
        <Status>
          <StatusItem $w={81}><Label ui w={39} size={11}>y 209.51</Label></StatusItem>
          <StatusItem $w={82}><Label ui w={28} size={11}>z 0.00</Label></StatusItem>
          <StatusItem $w={84}><Label ui w={20} size={11}>0.00</Label></StatusItem>
          <StatusItem $w={158} $line><Swatch $c="#000" /><Label ui w={99} size={11}>Make2D visible lines</Label></StatusItem>
          <StatusItem $w={43} $center $line><Label ui w={24} size={11}>Snap</Label></StatusItem>
          <StatusItem $w={43} $center $on $line><Label ui bold w={32} size={11}>Ortho</Label></StatusItem>
          <StatusItem $w={44} $center $line><Label ui w={31} size={11}>Planar</Label></StatusItem>
          <StatusItem $w={43} $center $on $line><Label ui bold w={33} size={11}>Osnap</Label></StatusItem>
          <StatusItem $w={101} $center $line><Label ui w={74} size={11}>Record History</Label></StatusItem>
        </Status>
        <MiniWindow>
          <Ico s={24} vb={24} c="#888" sw={1}><path d="M2 15a3 3 0 1 0 5-2l3-5M4 11a2 2 0 1 1 3-2M7 8l2-3M14 8.500h7v7h-7zM16 8.500v-2h7v7h-2" /></Ico>
          <Ico s={10} vb={10} c="#888" sw={1}><path d="M.5.500h9v9h-9z" /></Ico>
          <Ico s={11} vb={11} c="#888" sw={1}><path d="M1 1l9 9m0-9l-9 9" /></Ico>
        </MiniWindow>
      </Main>
    </Screen>
  );
}
